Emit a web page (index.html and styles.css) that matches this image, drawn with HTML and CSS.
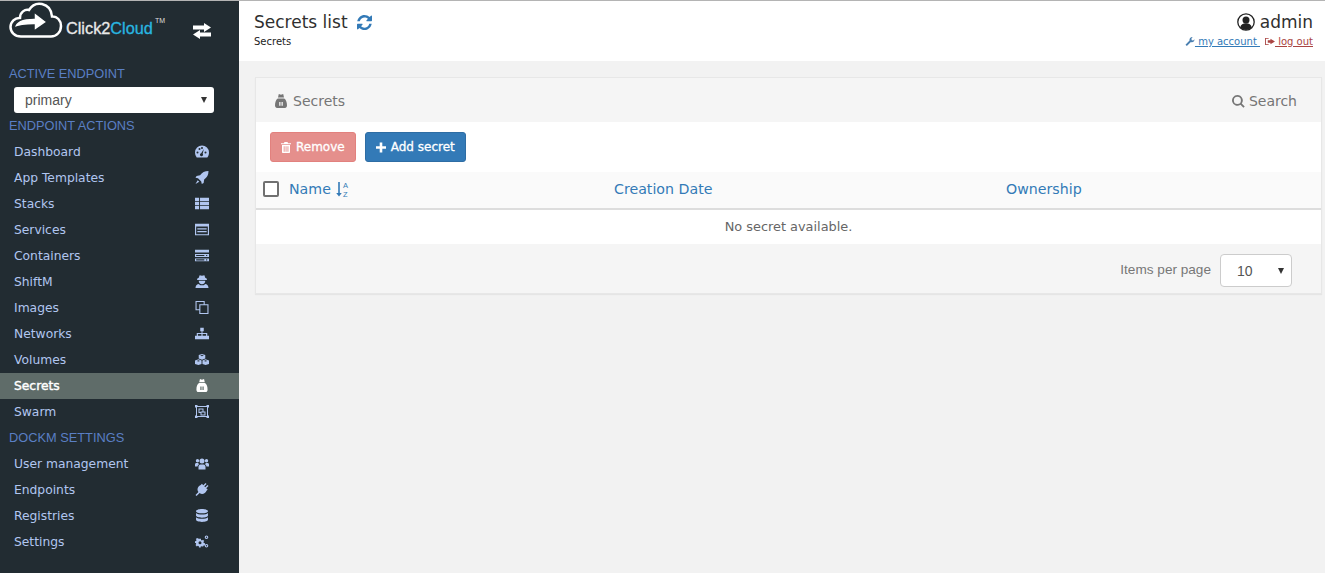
FILE: index.html
```html
<!DOCTYPE html>
<html lang="en">
<head>
  <meta charset="UTF-8">
  <title>Secrets list</title>
  <link rel="stylesheet" href="styles.css">
</head>
<body>

  <svg class="defs" width="0" height="0">
    <symbol id="i-dashboard" viewBox="0 0 14 12"><path fill-rule="evenodd" d="M7 0a7 7 0 0 1 7 7c0 1.900-.6 3.700-1.700 5H1.700A8 8 0 0 1 0 7a7 7 0 0 1 7-7zM2.500 6a1 1 0 1 0 0 2 1 1 0 0 0 0-2zM4.500 2.500a1 1 0 1 0 0 2 1 1 0 0 0 0-2zM7 1.500a1 1 0 1 0 0 2 1 1 0 0 0 0-2zM10.500 6a1 1 0 1 0 0 2 1 1 0 0 0 0-2zM8.800 3.500 6.200 7.700a1.500 1.500 0 1 0 1.500.6z"/></symbol>
    <symbol id="i-rocket" viewBox="0 0 12 12"><path d="M12 0c0 3.500-1.300 6-4 7.800L7.500 11 5.800 12l-.5-2.200-3-3L0 6.300l1-1.800 3.200-.5C6 1.300 8.500 0 12 0zM2 8.500l1.500 1.500L0 12z"/></symbol>
    <symbol id="i-table" viewBox="0 0 12 10"><path d="M0 0h3.500v2.800H0zM4.300 0H12v2.800H4.300zM0 3.600h3.500v2.800H0zM4.300 3.600H12v2.800H4.300zM0 7.200h3.500V10H0zM4.300 7.200H12V10H4.300z"/></symbol>
    <symbol id="i-list" viewBox="0 0 12 10"><path fill-rule="evenodd" d="M0 0h12v10H0zM1 2.500V9h10V2.500zM2 4h8v1H2zM2 6.300h8v1H2z"/></symbol>
    <symbol id="i-server" viewBox="0 0 12 10"><path fill-rule="evenodd" d="M0 0h12v2.500H0zM0 3.700h12v2.600H0zM0 7.500h12V10H0zM1 4.500v1h7v-1zM1 8.300v1h7v-1zM9.500 4.500v1h1v-1zM9.500 8.300v1h1v-1z"/></symbol>
    <symbol id="i-user-secret" viewBox="0 0 12 12"><path d="M3 2.500 3.800.3 6 .8 8.200.3 9 2.500l1.500 1V4.500h-9V3.500zM3 5.300h6c0 2-1.200 3.200-3 3.200S3 7.300 3 5.300zM0 12c0-2 .8-3.200 2.800-3.800L4.500 9.500h3l1.700-1.300C11.200 8.800 12 10 12 12z"/></symbol>
    <symbol id="i-clone" viewBox="0 0 12 12"><path fill-rule="evenodd" d="M0 0h8.500v3H12v9H3.500V8.500H0zM1 1v6.500h2.500V3h4V1zM4.500 4v7H11V4z"/></symbol>
    <symbol id="i-sitemap" viewBox="0 0 12 10"><path d="M4.500 0h3v3H6.400v1.500H10.500V7H12v3H8V7h1.500V5.500H6.500V7H8v3H4V7h1.500V5.500h-3V7H4v3H0V7h1.500V4.500h4.100V3H4.500z"/></symbol>
    <symbol id="i-cubes" viewBox="0 0 15 12"><path fill-rule="evenodd" d="M7.500 0l3.500 1.300v3.500L7.500 6.200 4 4.800V1.300zM5.500 1.800l2 .7 2-.7-2-.7zM3.700 5.700l3.300 1.300v3.700L3.700 12 0 10.700V7zM11.300 5.700 15 7v3.700L11.300 12 8 10.700V7zM1.800 7.500l1.900.7 1.700-.7-1.700-.6zM9.600 7.500l1.700.7 1.900-.7-1.900-.6z"/></symbol>
    <symbol id="i-secret" viewBox="0 0 12 14"><path fill-rule="evenodd" d="M3.800 0 6 .8 8.200 0l.8 3.600H3zM2.800 4.400h6.400C11 5.500 12 8 12 11.500 12 13 11 14 10 14H2c-1 0-2-1-2-2.500C0 8 1 5.500 2.800 4.400zM4.200 8v3.800h1.300V8zM6.500 8v3.800h1.300V8z"/></symbol>
    <symbol id="i-swarm" viewBox="0 0 14 13"><path fill-rule="evenodd" d="M0 0h2.500v1H11.500V0H14v2.500h-1v8h1V13h-2.500v-1h-9v1H0v-2.500h1v-8H0zM2 2v9h10V2zM3.500 3.500h5v3h2v4h-5v-2.500h-2zM4.500 4.500v2.500h1V6.500h2v-2zM6.500 7.500v2h3v-2z"/></symbol>
    <symbol id="i-users" viewBox="0 0 14 12"><path d="M2.500 1.500a1.700 1.700 0 1 1 0 3.400 1.700 1.700 0 0 1 0-3.400zM11.500 1.500a1.700 1.700 0 1 1 0 3.400 1.700 1.700 0 0 1 0-3.400zM7 1a2.500 2.500 0 1 1 0 5 2.500 2.500 0 0 1 0-5zM0 9V7c0-1 .7-1.500 1.500-1.500h1.800a3.500 3.500 0 0 0 .7 1.300A3 3 0 0 0 2.500 9zM14 9V7c0-1-.7-1.500-1.500-1.500h-1.800a3.500 3.500 0 0 1-.7 1.300A3 3 0 0 1 11.500 9zM3.500 9.500C3.500 8 4.200 7 5.500 7h3c1.300 0 2 1 2 2.500V12h-7z"/></symbol>
    <symbol id="i-plug" viewBox="0 0 12 12"><path d="M12 2.700 9.900 4.800l1.300 1.300-1 1C9.300 9.800 6 11 3.800 9.300L1 12l-1-1 2.700-2.800C1 6 2.200 2.700 4.900 1.800l1-1 1.300 1.300L9.300 0l.9.900-2.100 2.100.9.900 2.100-2.100z"/></symbol>
    <symbol id="i-database" viewBox="0 0 11 12"><path fill-rule="evenodd" d="M5.500 0C8.500 0 11 .9 11 2s-2.500 2-5.500 2S0 3.100 0 2s2.500-2 5.500-2zM0 3.600C1 4.600 3 5 5.500 5S10 4.600 11 3.600V6c0 1.100-2.500 2-5.500 2S0 7.100 0 6zM0 7.600C1 8.600 3 9 5.500 9S10 8.600 11 7.600V10c0 1.100-2.500 2-5.500 2S0 11.100 0 10z"/></symbol>
    <symbol id="i-cogs" viewBox="0 0 14 12"><path fill-rule="evenodd" d="M4 3.200h2v1.200l1 .5 1-.7 1.200 1.400-.8.900.4 1.100 1.200.1v1.800l-1.200.2-.4 1-.9.200-1-.2-1 .5L5.900 12H4l-.2-1.300-1-.4-1 .7L.5 9.600l.7-1-.3-1L0 7.400V5.700l1.100-.2.4-1-.7-1L2.100 2.400l1 .6zM5 5.700a1.500 1.500 0 1 0 0 3 1.500 1.500 0 0 0 0-3zM11.500 0a1.800 1.800 0 1 1 0 3.600 1.800 1.800 0 0 1 0-3.600zm0 1.100a.7.700 0 1 0 0 1.400.7.700 0 0 0 0-1.400zM11.500 8.400a1.800 1.800 0 1 1 0 3.600 1.800 1.800 0 0 1 0-3.600zm0 1.100a.7.700 0 1 0 0 1.400.7.700 0 0 0 0-1.400z"/></symbol>
    <symbol id="i-trash" viewBox="0 0 10 11"><path fill-rule="evenodd" d="M3.500 0h3l.6 1.300H10v1H0v-1h2.900zM1 3h8v7c0 .6-.4 1-1 1H2c-.6 0-1-.4-1-1zM2.700 4.200v5.500h.9V4.200zM4.600 4.200v5.500h.9V4.200zM6.500 4.200v5.500h.9V4.200z"/></symbol>
    <symbol id="i-refresh" viewBox="0 0 14 14"><path d="M13.700 8.300C13 11.500 10.300 14 7 14c-1.800 0-3.500-.7-4.800-1.900L1 13.300c-.3.300-1 .1-1-.4V8.800c0-.3.300-.6.600-.6h4.100c.5 0 .7.700.4 1L3.800 10.500c.8.800 2 1.300 3.200 1.300 1.700 0 3.100-.9 3.900-2.300.2-.3.400-1 .5-1.300h2.200c.1 0 .1 0 .1.100zM14 5.200c0 .3-.3.600-.6.600H9.300c-.5 0-.7-.7-.4-1l1.300-1.300C9.400 2.700 8.200 2.300 7 2.300c-1.700 0-3.100.9-3.900 2.300-.2.300-.4 1-.5 1.300H.3C.2 5.900.2 5.800.2 5.800.9 2.500 3.700 0 7 0c1.800 0 3.500.7 4.800 1.900L13 .7c.3-.3 1-.1 1 .4z"/></symbol>
  </svg>

  <div class="layout">
    <aside class="sidebar">
      <div class="brand">
        <div class="logo">
          <svg class="logo-cloud" viewBox="0 0 54 38">
            <path d="M12 35.500C5.500 35.500 1.500 31 1.500 26S6 16.500 11 17c0-6 5-9 9-8 3-5 8-7 13-6 6 1.300 9.500 6 10 12.500 5-.5 9 4 9 9.500 0 6-4.500 10.500-10 10.500z" fill="none" stroke="#fff" stroke-width="2.500"/>
            <path d="M5 27c1-7 8-10 20-10V11l13 10-13 9v-6c-8 0-13 0-20 3z" fill="#fff" stroke="#222c32" stroke-width="1.500"/>
          </svg>
          <span class="logo-text">Click2<b>Cloud</b></span>
          <span class="logo-tm">TM</span>
        </div>
        <svg class="swap" viewBox="0 0 18 16"><path d="M0 2.500h11V0l7 4.500L11 9V6.500H0zM18 9.500H7V7L0 11.500 7 16v-2.500h11z" fill="#fff"/></svg>
      </div>

      <div class="side-title first">ACTIVE ENDPOINT</div>
      <div class="select-wrap side-select">
        <select><option>primary</option></select>
      </div>

      <div class="side-title">ENDPOINT ACTIONS</div>
      <ul class="side-menu">
        <li><span>Dashboard</span><svg class="side-icon"><use href="#i-dashboard"/></svg></li>
        <li><span>App Templates</span><svg class="side-icon"><use href="#i-rocket"/></svg></li>
        <li><span>Stacks</span><svg class="side-icon"><use href="#i-table"/></svg></li>
        <li><span>Services</span><svg class="side-icon"><use href="#i-list"/></svg></li>
        <li><span>Containers</span><svg class="side-icon"><use href="#i-server"/></svg></li>
        <li><span>ShiftM</span><svg class="side-icon"><use href="#i-user-secret"/></svg></li>
        <li><span>Images</span><svg class="side-icon"><use href="#i-clone"/></svg></li>
        <li><span>Networks</span><svg class="side-icon"><use href="#i-sitemap"/></svg></li>
        <li><span>Volumes</span><svg class="side-icon"><use href="#i-cubes"/></svg></li>
        <li class="active"><span>Secrets</span><svg class="side-icon"><use href="#i-secret"/></svg></li>
        <li><span>Swarm</span><svg class="side-icon"><use href="#i-swarm"/></svg></li>
      </ul>

      <div class="side-title">DOCKM SETTINGS</div>
      <ul class="side-menu">
        <li><span>User management</span><svg class="side-icon"><use href="#i-users"/></svg></li>
        <li><span>Endpoints</span><svg class="side-icon"><use href="#i-plug"/></svg></li>
        <li><span>Registries</span><svg class="side-icon"><use href="#i-database"/></svg></li>
        <li><span>Settings</span><svg class="side-icon"><use href="#i-cogs"/></svg></li>
      </ul>
    </aside>

    <div class="content">
      <header class="topbar">
        <div>
          <div class="page-title">Secrets list
            <svg class="refresh"><use href="#i-refresh"/></svg>
          </div>
          <div class="crumb">Secrets</div>
        </div>
        <div class="user-box">
          <div class="user-name">
            <svg class="user-icon" viewBox="0 0 18 18">
              <circle cx="9" cy="9" r="8.200" fill="#fff" stroke="#222" stroke-width="1.300"/>
              <circle cx="9" cy="7" r="3.500" fill="#222"/>
              <path d="M3.200 14.500c.6-3 2.800-4.200 5.800-4.200s5.200 1.200 5.800 4.200A8 8 0 0 1 9 17a8 8 0 0 1-5.800-2.500z" fill="#222"/>
            </svg>
            admin
          </div>
          <div class="user-links"><svg class="link-icon blue" viewBox="0 0 10 10"><path d="M0 8.500 4.500 4C4 2 5.500 0 8 0L6.500 2l.5 1.500L8.500 4 10 2.500C10 5 8 6.300 6 5.500L1.500 10z"/></svg><a class="acct" href="#"> my account </a><svg class="link-icon red" viewBox="0 0 11 10"><path fill-rule="evenodd" d="M0 1h4v1H1v6h3v1H0zM6 2l5 3-5 3V6.300H3V3.700h3z"/></svg><a class="logout" href="#"> log out</a></div>
        </div>
      </header>

      <main class="page">
        <section class="panel">
          <div class="panel-head">
            <div class="panel-title"><svg class="panel-icon"><use href="#i-secret"/></svg>Secrets</div>
            <div class="search">
              <svg class="search-icon" viewBox="0 0 14 14"><path d="M5.800 0a5.800 5.800 0 0 1 4.700 9.200l3.200 3.200-1.400 1.400-3.200-3.200A5.800 5.800 0 1 1 5.800 0zm0 2a3.800 3.800 0 1 0 0 7.600 3.800 3.800 0 0 0 0-7.600z"/></svg>Search
            </div>
          </div>

          <div class="actions">
            <button class="btn btn-danger"><svg class="btn-icon"><use href="#i-trash"/></svg>Remove</button>
            <button class="btn btn-primary"><svg class="btn-icon" viewBox="0 0 10 10"><path d="M3.700 0h2.600v3.700H10v2.600H6.300V10H3.700V6.300H0V3.700h3.700z"/></svg>Add secret</button>
          </div>

          <div class="table-head">
            <div class="col col-name">
              <span class="checkbox"></span>
              <a href="#">Name</a>
              <svg class="sort" viewBox="0 0 14 16">
                <path d="M2.200 1h1.600v11h2L3 15.500.2 12h2z" fill="#337ab7"/>
                <text x="7" y="7" font-size="7.500" fill="#337ab7" font-family="Liberation Sans, sans-serif">A</text>
                <text x="7" y="15.500" font-size="7.500" fill="#337ab7" font-family="Liberation Sans, sans-serif">Z</text>
              </svg>
            </div>
            <div class="col col-date"><a href="#">Creation Date</a></div>
            <div class="col"><a href="#">Ownership</a></div>
          </div>

          <div class="empty">No secret available.</div>

          <div class="panel-foot">
            <span class="per-page">Items per page</span>
            <div class="select-wrap foot-select">
              <select><option>10</option></select>
            </div>
          </div>
        </section>
      </main>
    </div>
  </div>

</body>
</html>
```

FILE: styles.css
```css
* {
  box-sizing: border-box;
}

body {
  margin: 0;
  font-family: "DejaVu Sans", sans-serif;
  font-size: 13px;
  background-color: #f2f2f2;
  color: #333;
  border-top: 1px solid #b4b4b4;
}

a {
  color: #337ab7;
  text-decoration: none;
}

.defs {
  position: absolute;
}

.layout {
  display: flex;
  height: 572px;
  overflow: hidden;
}

/* sidebar */

.sidebar {
  width: 239px;
  flex-shrink: 0;
  background-color: #222c32;
  color: #b1c6f0;
}

.brand {
  height: 60px;
  padding: 0 28px 0 9px;
  display: flex;
  justify-content: space-between;
  align-items: flex-start;
}

.logo {
  display: flex;
  align-items: flex-start;
}

.logo-cloud {
  width: 54px;
  height: 38px;
}

.logo-text {
  font-family: "Liberation Sans", sans-serif;
  font-size: 16.300px;
  color: #e9e9e9;
  -webkit-text-stroke: 0.3px;
  margin: 18px 0 0 3px;
}

.logo-text b {
  font-weight: normal;
  color: #29b6e0;
}

.logo-tm {
  font-family: "Liberation Sans", sans-serif;
  font-size: 7px;
  color: #ddd;
  margin: 16px 0 0 2px;
}

.swap {
  width: 18px;
  height: 16px;
  margin-top: 22px;
}

.side-title {
  height: 26px;
  padding-left: 9px;
  line-height: 26px;
  font-family: "Liberation Sans", sans-serif;
  font-size: 12.800px;
  color: #5a7fc4;
  white-space: nowrap;
}

.side-title.first {
  line-height: 25px;
}

.select-wrap {
  position: relative;
  background-color: #fff;
}

.select-wrap::after {
  content: "";
  position: absolute;
  top: 50%;
  margin-top: -3px;
  border-left: 3.500px solid transparent;
  border-right: 3.500px solid transparent;
  border-top: 6px solid #333;
  pointer-events: none;
}

.select-wrap select {
  width: 100%;
  height: 100%;
  border: none;
  background: none;
  appearance: none;
  font-family: "Liberation Sans", sans-serif;
  color: #555;
  outline: none;
}

.side-select {
  width: 200px;
  height: 26px;
  margin-left: 14px;
  border-radius: 3px;
}

.side-select::after {
  right: 7px;
}

.side-select select {
  font-size: 14px;
  padding-left: 11px;
}

.side-menu {
  list-style: none;
  margin: 0;
  padding: 0;
}

.side-menu li {
  height: 26px;
  padding: 0 30px 1px 14px;
  display: flex;
  justify-content: space-between;
  align-items: center;
  font-size: 12.300px;
}

.side-menu li.active {
  background-color: #5f6c69;
  color: #fff;
  -webkit-text-stroke: 0.4px #fff;
}

.side-icon {
  width: 14px;
  height: 13px;
  fill: currentColor;
}

/* top bar */

.content {
  flex: 1;
  min-width: 0;
}

.topbar {
  height: 60px;
  padding: 11px 12px 0 15px;
  background-color: #fff;
  display: flex;
  justify-content: space-between;
}

.page-title {
  font-size: 17px;
  color: #2f2f2f;
  display: flex;
  align-items: center;
  gap: 9px;
  height: 20px;
}

.refresh {
  width: 15px;
  height: 15px;
  fill: #337ab7;
}

.crumb {
  font-size: 10px;
  margin-top: 4px;
  color: #222;
}

.user-box {
  text-align: right;
}

.user-name {
  font-size: 17px;
  color: #2f2f2f;
  display: flex;
  justify-content: flex-end;
  align-items: center;
  gap: 5px;
  height: 20px;
}

.user-icon {
  width: 18px;
  height: 18px;
}

.user-links {
  font-size: 10px;
  margin-top: 4px;
  white-space: pre;
}

.user-links a {
  text-decoration: underline;
}

.link-icon {
  width: 10px;
  height: 9px;
  vertical-align: -1px;
}

.link-icon.blue {
  fill: #4a7fb0;
}

.link-icon.red {
  fill: #a94442;
  margin-left: 5px;
}

.user-links .logout {
  color: #a94442;
}

/* panel */

.page {
  padding: 16px 3px 0 16px;
}

.panel {
  background-color: #fff;
  border: 1px solid #e7e7e7;
  box-shadow: 0 1px 1px rgba(0, 0, 0, 0.05);
}

.panel-head {
  height: 44px;
  padding: 2px 24px 0 19px;
  background-color: #f5f5f5;
  display: flex;
  justify-content: space-between;
  align-items: center;
  color: #767676;
  font-size: 14px;
}

.panel-title, .search {
  display: flex;
  align-items: center;
}

.panel-icon {
  width: 12px;
  height: 14px;
  margin-right: 6px;
  fill: #767676;
}

.search-icon {
  width: 13px;
  height: 13px;
  margin-right: 4px;
  fill: #767676;
}

.actions {
  height: 50px;
  padding: 10px 0 0 14px;
  display: flex;
  gap: 9px;
  align-items: flex-start;
}

.btn {
  height: 30px;
  padding: 0 10px;
  border: 1px solid transparent;
  border-radius: 3px;
  font-family: inherit;
  font-size: 12px;
  -webkit-text-stroke: 0.3px #fff;
  color: #fff;
  display: flex;
  align-items: center;
  gap: 5px;
}

.btn-danger {
  background-color: #e58f8c;
  border-color: #e2817e;
}

.btn-primary {
  background-color: #337ab7;
  border-color: #2e6da4;
}

.btn-icon {
  width: 10px;
  height: 11px;
  fill: #fff;
}

.table-head {
  height: 38px;
  background-color: #fafafa;
  border-bottom: 2px solid #ddd;
  display: flex;
  align-items: center;
  padding: 0 0 3px 7px;
  font-size: 14.200px;
}

.col {
  display: flex;
  align-items: center;
}

.col-name {
  width: 351px;
}

.col-date {
  width: 392px;
}

.checkbox {
  width: 16px;
  height: 16px;
  border: 2px solid #707070;
  border-radius: 2px;
  background-color: #fff;
  margin-right: 10px;
}

.sort {
  width: 14px;
  height: 16px;
  margin-left: 5px;
}

.empty {
  height: 34px;
  line-height: 34px;
  text-align: center;
  font-size: 12.900px;
  color: #666;
}

.panel-foot {
  height: 49px;
  background-color: #f5f5f5;
  padding: 10px 29px 0 0;
  display: flex;
  justify-content: flex-end;
  gap: 9px;
}

.per-page {
  font-family: "Liberation Sans", sans-serif;
  font-size: 13.600px;
  line-height: 31px;
  color: #777;
}

.foot-select {
  width: 72px;
  height: 33px;
  border: 1px solid #ccc;
  border-radius: 4px;
}

.foot-select::after {
  right: 7px;
}

.foot-select select {
  font-size: 14px;
  padding-left: 16px;
}
```
